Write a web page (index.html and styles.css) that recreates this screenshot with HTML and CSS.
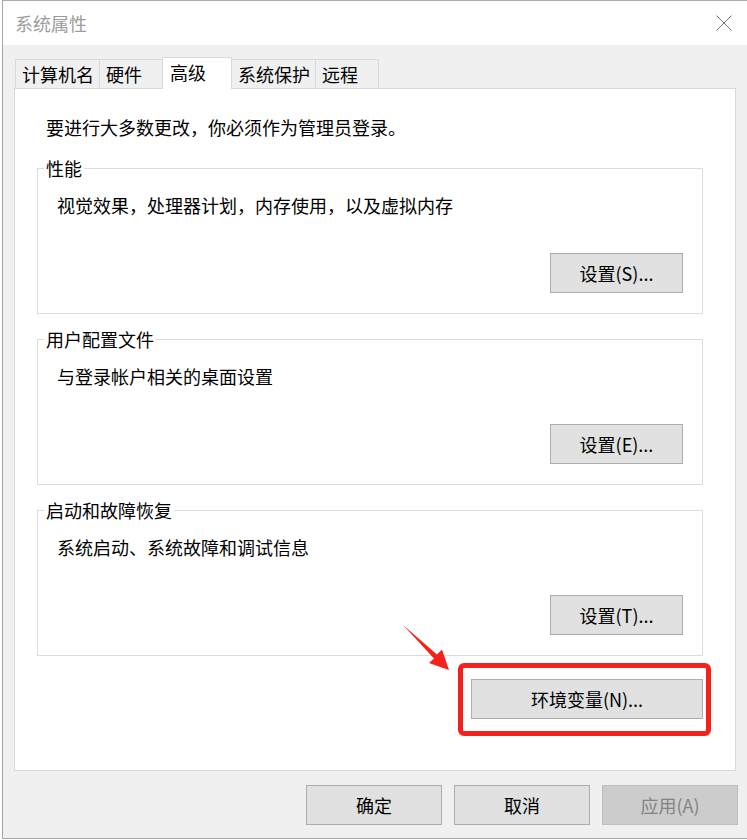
FILE: index.html
```html
<!DOCTYPE html>
<html lang="zh-CN">
<head>
  <meta charset="UTF-8">
  <meta name="viewport" content="width=device-width, initial-scale=1.0">
  <title>系统属性</title>
  <link rel="stylesheet" href="styles.css">
</head>
<body>
  <div class="window">
    <div class="titlebar">
      <span class="title">系统属性</span>
      <svg class="close" width="16" height="16" viewBox="0 0 16 16">
        <path d="M0.5 0.5 L15.5 15.5 M15.5 0.5 L0.5 15.5" stroke="#777" stroke-width="1" fill="none"/>
      </svg>
    </div>

    <div class="content">
      <!-- Tab strip -->
      <div class="tabs">
        <div class="tab">计算机名</div>
        <div class="tab">硬件</div>
        <div class="tab active">高级</div>
        <div class="tab">系统保护</div>
        <div class="tab">远程</div>
      </div>

      <!-- Advanced tab page -->
      <div class="panel">
        <p class="intro">要进行大多数更改，你必须作为管理员登录。</p>

        <fieldset class="group">
          <legend>性能</legend>
          <div class="group-body">
            <p class="desc">视觉效果，处理器计划，内存使用，以及虚拟内存</p>
            <div class="group-actions"><button class="btn">设置(S)...</button></div>
          </div>
        </fieldset>

        <fieldset class="group">
          <legend>用户配置文件</legend>
          <div class="group-body">
            <p class="desc">与登录帐户相关的桌面设置</p>
            <div class="group-actions"><button class="btn">设置(E)...</button></div>
          </div>
        </fieldset>

        <fieldset class="group">
          <legend>启动和故障恢复</legend>
          <div class="group-body">
            <p class="desc">系统启动、系统故障和调试信息</p>
            <div class="group-actions"><button class="btn">设置(T)...</button></div>
          </div>
        </fieldset>

        <div class="env-row"><button class="btn btn-env">环境变量(N)...</button></div>

        <!-- annotation -->
        <div class="highlight"></div>
        <svg class="arrow" width="52" height="54" viewBox="400 620 52 54">
          <polygon points="403,625 437,654.5 442,649.5 449,670 429,663 434,658.5" fill="#f5211c"/>
        </svg>
      </div>

      <div class="footer">
        <button class="btn btn-wide">确定</button>
        <button class="btn btn-wide">取消</button>
        <button class="btn btn-wide" disabled>应用(A)</button>
      </div>
    </div>
  </div>
</body>
</html>
```

FILE: styles.css
```css
body {
  margin: 0;
  padding: 0;
  background: #fff;
  font-family: "Noto Sans CJK SC", "Noto Sans", sans-serif;
  font-size: 18px;
  color: #000;
}
.window {
  margin-left: 2px;
  width: 745px;
  border-left: 1px solid #a6a6a6;
  border-top: 1px solid #ababab;
  border-bottom: 1px solid #a6a6a6;
  box-sizing: border-box;
}
.titlebar {
  height: 44px;
  background: #fff;
  display: flex;
  align-items: center;
  justify-content: space-between;
  padding: 0 15px 0 12px;
}
.title {
  color: #9c9c9c;
  line-height: 24px;
}
.content {
  background: #f0f0f0;
  padding: 12px 11px 13px 11px;
}
.tabs {
  display: flex;
  align-items: flex-end;
  margin-left: 1px;
}
.tab {
  box-sizing: border-box;
  min-width: 64px;
  height: 29px;
  line-height: 28px;
  padding: 0 5px 0 6px;
  border: 1px solid #d9d9d9;
  border-bottom: none;
  margin-right: -1px;
  background: #f0f0f0;
}
.tab.active {
  position: relative;
  z-index: 1;
  min-width: 70px;
  height: 32px;
  padding: 0 6px 0 7px;
  margin-bottom: -1px;
  background: #fff;
}
.panel {
  position: relative;
  height: 683px;
  box-sizing: border-box;
  background: #fff;
  border: 1px solid #d9d9d9;
  padding: 26px 32px 0 22px;
}
.intro {
  margin: 0 0 17px 9px;
  line-height: 24px;
}
.group {
  margin: 0 0 13px 0;
  padding: 0;
  border: 1px solid #dcdcdc;
  min-width: 0;
}
.group legend {
  margin-left: 6px;
  padding: 0 2px;
  line-height: 25px;
}
.group-body {
  padding: 12px 19px 20px 19px;
}
.desc {
  margin: 0;
  line-height: 24px;
}
.group-actions {
  display: flex;
  justify-content: flex-end;
  margin-top: 36px;
}
.btn {
  font-family: inherit;
  font-size: 18px;
  color: #000;
  width: 133px;
  height: 40px;
  padding: 0;
  background: #e1e1e1;
  border: 1px solid #adadad;
  border-radius: 0;
}
.btn:disabled {
  background: #cccccc;
  border-color: #bfbfbf;
  color: #838383;
}
.env-row {
  display: flex;
  justify-content: flex-end;
  margin-top: 23px;
}
.btn-env {
  width: 232px;
}
.btn-wide {
  width: 136px;
}
.footer {
  display: flex;
  justify-content: flex-end;
  gap: 12px;
  margin: 14px -2px 0 0;
}
.highlight {
  position: absolute;
  left: 443px;
  top: 574px;
  width: 253px;
  height: 73px;
  box-sizing: border-box;
  border: 5px solid #f5211c;
  border-radius: 6px;
}
.arrow {
  position: absolute;
  left: 385px;
  top: 531px;
}
```
